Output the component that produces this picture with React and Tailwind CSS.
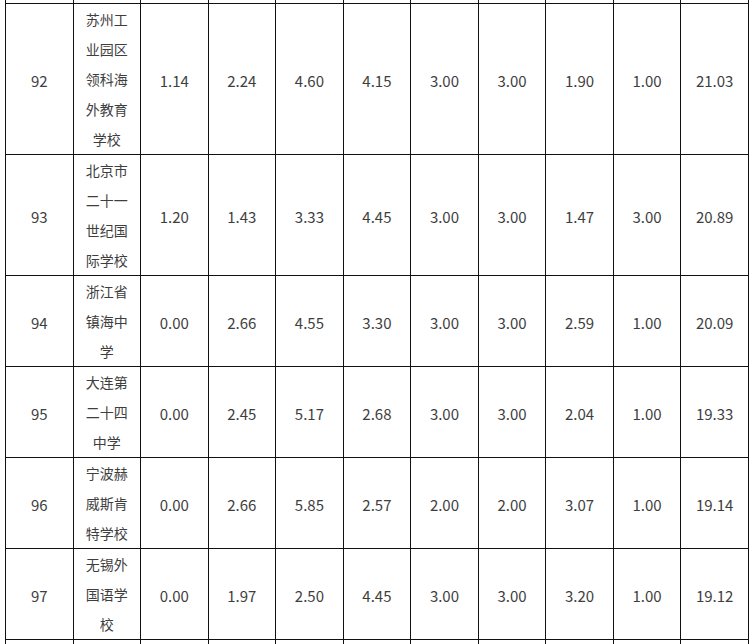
import React from 'react';

const rows = [
  ['92', '苏州工业园区领科海外教育学校', '1.14', '2.24', '4.60', '4.15', '3.00', '3.00', '1.90', '1.00', '21.03'],
  ['93', '北京市二十一世纪国际学校', '1.20', '1.43', '3.33', '4.45', '3.00', '3.00', '1.47', '3.00', '20.89'],
  ['94', '浙江省镇海中学', '0.00', '2.66', '4.55', '3.30', '3.00', '3.00', '2.59', '1.00', '20.09'],
  ['95', '大连第二十四中学', '0.00', '2.45', '5.17', '2.68', '3.00', '3.00', '2.04', '1.00', '19.33'],
  ['96', '宁波赫威斯肯特学校', '0.00', '2.66', '5.85', '2.57', '2.00', '2.00', '3.07', '1.00', '19.14'],
  ['97', '无锡外国语学校', '0.00', '1.97', '2.50', '4.45', '3.00', '3.00', '3.20', '1.00', '19.12'],
];

const cols = Array.from({ length: 11 });

export default function App() {
  return (
    <div
      className="h-[644px] w-[754px] overflow-hidden bg-white pl-[5px]"
      style={{ fontFamily: '"Noto Sans CJK SC", "Noto Sans", sans-serif' }}
    >
      <table className="mt-[-28px] w-[744px] table-fixed border-collapse leading-[30px] text-[#3e3e3e]">
        <tbody>
          {/* tail of the row above, scrolled out of view */}
          <tr className="h-[31px]">
            {cols.map((_, i) => (
              <td key={i} className="border border-[#111]" />
            ))}
          </tr>
          {rows.map(row => (
            <tr key={row[0]}>
              {row.map((cell, i) => (
                <td
                  key={i}
                  className={`border border-[#111] p-0 text-center align-middle ${
                    i === 1 ? 'px-2 text-[14px]' : 'pt-[4px] text-[15px]'
                  }`}
                >
                  {cell}
                </td>
              ))}
            </tr>
          ))}
          <tr className="h-[31px]">
            {cols.map((_, i) => (
              <td key={i} className="border border-[#111]" />
            ))}
          </tr>
        </tbody>
      </table>
    </div>
  );
}
